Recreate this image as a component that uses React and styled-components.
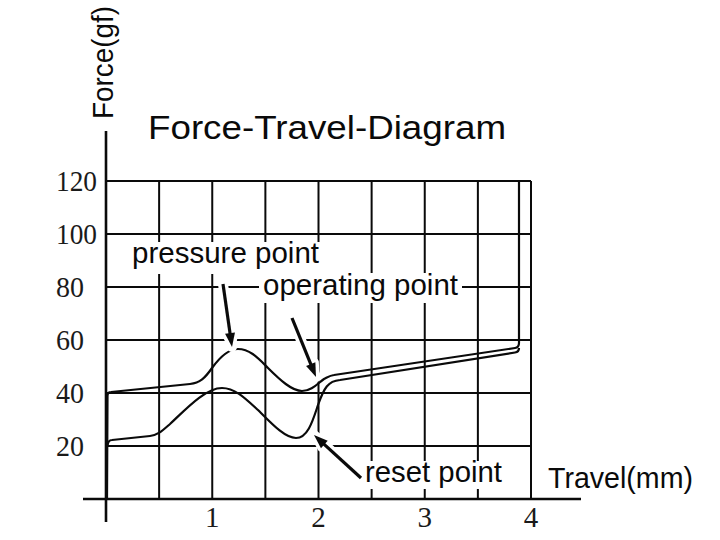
import React from 'react'
import styled, { createGlobalStyle } from 'styled-components'

const GlobalStyle = createGlobalStyle`
  html, body {
    margin: 0;
    padding: 0;
    background: #ffffff;
  }
`

// chart geometry (px)
const X0 = 106
const XR = 531
const Y0 = 499
const YT = 181
const STEP_X = 53.125
const STEP_Y = 53

const verticals = [1, 2, 3, 4, 5, 6, 7, 8].map((k) => X0 + STEP_X * k)
const horizontals = [1, 2, 3, 4, 5, 6].map((k) => Y0 - STEP_Y * k)
const forceTicks = [20, 40, 60, 80, 100, 120]
const travelTicks = [1, 2, 3, 4]

const pressPath =
  'M107,499 L107.5,396 Q107.5,392 111,392 L190,384 C200,383 205,378 212,368 C220,357 228,349 238,349 C250,349 258,358 268,368 C280,380 292,391 302,391 C312,391 318,383 324,379 C328,377 330,375.5 334,375 L515,348 Q519,347.5 519,343 L519,181'

const returnPath =
  'M107.5,446 Q108,440 112,440 L150,436 C158,435 162,431 170,424 C185,410 205,388 222,388 C235,388 245,398 258,410 C272,424 285,438 296,438 C308,438 313,420 318,405 C324,388 328,381 340,380 L515,352.5 Q519,352 519,348'

const arrows = [
  { from: [223, 284], to: [232, 347] },
  { from: [292, 318], to: [316, 377] },
  { from: [361, 478], to: [314, 435] },
]

const callouts = [
  { text: 'pressure point', x: 132, y: 263, w: 187, box: [128, 242, 194, 32] },
  { text: 'operating point', x: 263, y: 295, w: 195, box: [259, 273, 203, 30] },
  { text: 'reset point', x: 365, y: 482, w: 137, box: [362, 461, 144, 28] },
]

function Arrow({ from, to }) {
  const [x1, y1] = from
  const [x2, y2] = to
  const dx = x2 - x1
  const dy = y2 - y1
  const len = Math.hypot(dx, dy)
  const ux = dx / len
  const uy = dy / len
  const head = 14
  const half = 5
  const bx = x2 - ux * head
  const by = y2 - uy * head
  const pts = `${x2},${y2} ${bx - uy * half},${by + ux * half} ${bx + uy * half},${by - ux * half}`
  return (
    <g>
      <Halo x1={x1} y1={y1} x2={x2} y2={y2} />
      <HaloHead points={pts} />
      <Shaft x1={x1} y1={y1} x2={bx + ux * 2} y2={by + uy * 2} />
      <Head points={pts} />
    </g>
  )
}

export default function App() {
  return (
    <Page>
      <GlobalStyle />
      <Chart viewBox="0 0 720 540" width="720" height="540">
        <AxisTitle transform="translate(113,119) rotate(-90)" textLength="113" lengthAdjust="spacingAndGlyphs">
          Force(gf)
        </AxisTitle>
        <Title x="148" y="139" textLength="358" lengthAdjust="spacingAndGlyphs">
          Force-Travel-Diagram
        </Title>

        {horizontals.map((y) => (
          <GridLine key={'h' + y} x1={X0} y1={y} x2={XR} y2={y} />
        ))}
        {verticals.map((x) => (
          <GridLine key={'v' + x} x1={x} y1={YT} x2={x} y2={Y0} />
        ))}

        <Axis x1="83" y1={Y0} x2="581" y2={Y0} />
        <Axis x1={X0} y1="131" x2={X0} y2="522" />

        {forceTicks.map((v, i) => (
          <TickLabel
            key={v}
            x="56"
            y={Y0 - STEP_Y * (i + 1) + 10}
            textLength={v >= 100 ? 41 : 28}
            lengthAdjust="spacingAndGlyphs"
          >
            {v}
          </TickLabel>
        ))}
        {travelTicks.map((v) => (
          <TickLabel key={'t' + v} x={X0 + STEP_X * 2 * v} y="527" $center>
            {v}
          </TickLabel>
        ))}

        <Curve d={pressPath} />
        <Curve d={returnPath} />

        {callouts.map((c) => (
          <g key={c.text}>
            <LabelBox x={c.box[0]} y={c.box[1]} width={c.box[2]} height={c.box[3]} />
            <Callout x={c.x} y={c.y} textLength={c.w} lengthAdjust="spacingAndGlyphs">
              {c.text}
            </Callout>
          </g>
        ))}

        {arrows.map((a, i) => (
          <Arrow key={i} from={a.from} to={a.to} />
        ))}

        <Callout x="548" y="488" textLength="145" lengthAdjust="spacingAndGlyphs">
          Travel(mm)
        </Callout>
      </Chart>
    </Page>
  )
}

const Page = styled.div`
  width: 720px;
  height: 540px;
  background: #ffffff;
  overflow: hidden;
`

const Chart = styled.svg`
  display: block;
`

const Title = styled.text`
  font-family: "Liberation Sans", Arial, sans-serif;
  font-size: 34px;
  fill: #0a0a0a;
`

const AxisTitle = styled.text`
  font-family: "Liberation Sans", Arial, sans-serif;
  font-size: 29px;
  fill: #0a0a0a;
`

const Callout = styled.text`
  font-family: "Liberation Sans", Arial, sans-serif;
  font-size: 29px;
  fill: #0a0a0a;
`

const TickLabel = styled.text`
  font-family: "Liberation Serif", "Times New Roman", serif;
  font-size: 29px;
  fill: #1a1a1a;
  text-anchor: ${(p) => (p.$center ? 'middle' : 'start')};
`

const GridLine = styled.line`
  stroke: #0a0a0a;
  stroke-width: 2;
`

const Axis = styled.line`
  stroke: #0a0a0a;
  stroke-width: 2.6;
`

const Curve = styled.path`
  fill: none;
  stroke: #0a0a0a;
  stroke-width: 2.2;
  stroke-linejoin: round;
`

const LabelBox = styled.rect`
  fill: #ffffff;
`

const Halo = styled.line`
  stroke: #ffffff;
  stroke-width: 10;
  stroke-linecap: round;
`

const HaloHead = styled.polygon`
  fill: #ffffff;
  stroke: #ffffff;
  stroke-width: 7;
  stroke-linejoin: round;
`

const Shaft = styled.line`
  stroke: #0a0a0a;
  stroke-width: 3.2;
`

const Head = styled.polygon`
  fill: #0a0a0a;
`
